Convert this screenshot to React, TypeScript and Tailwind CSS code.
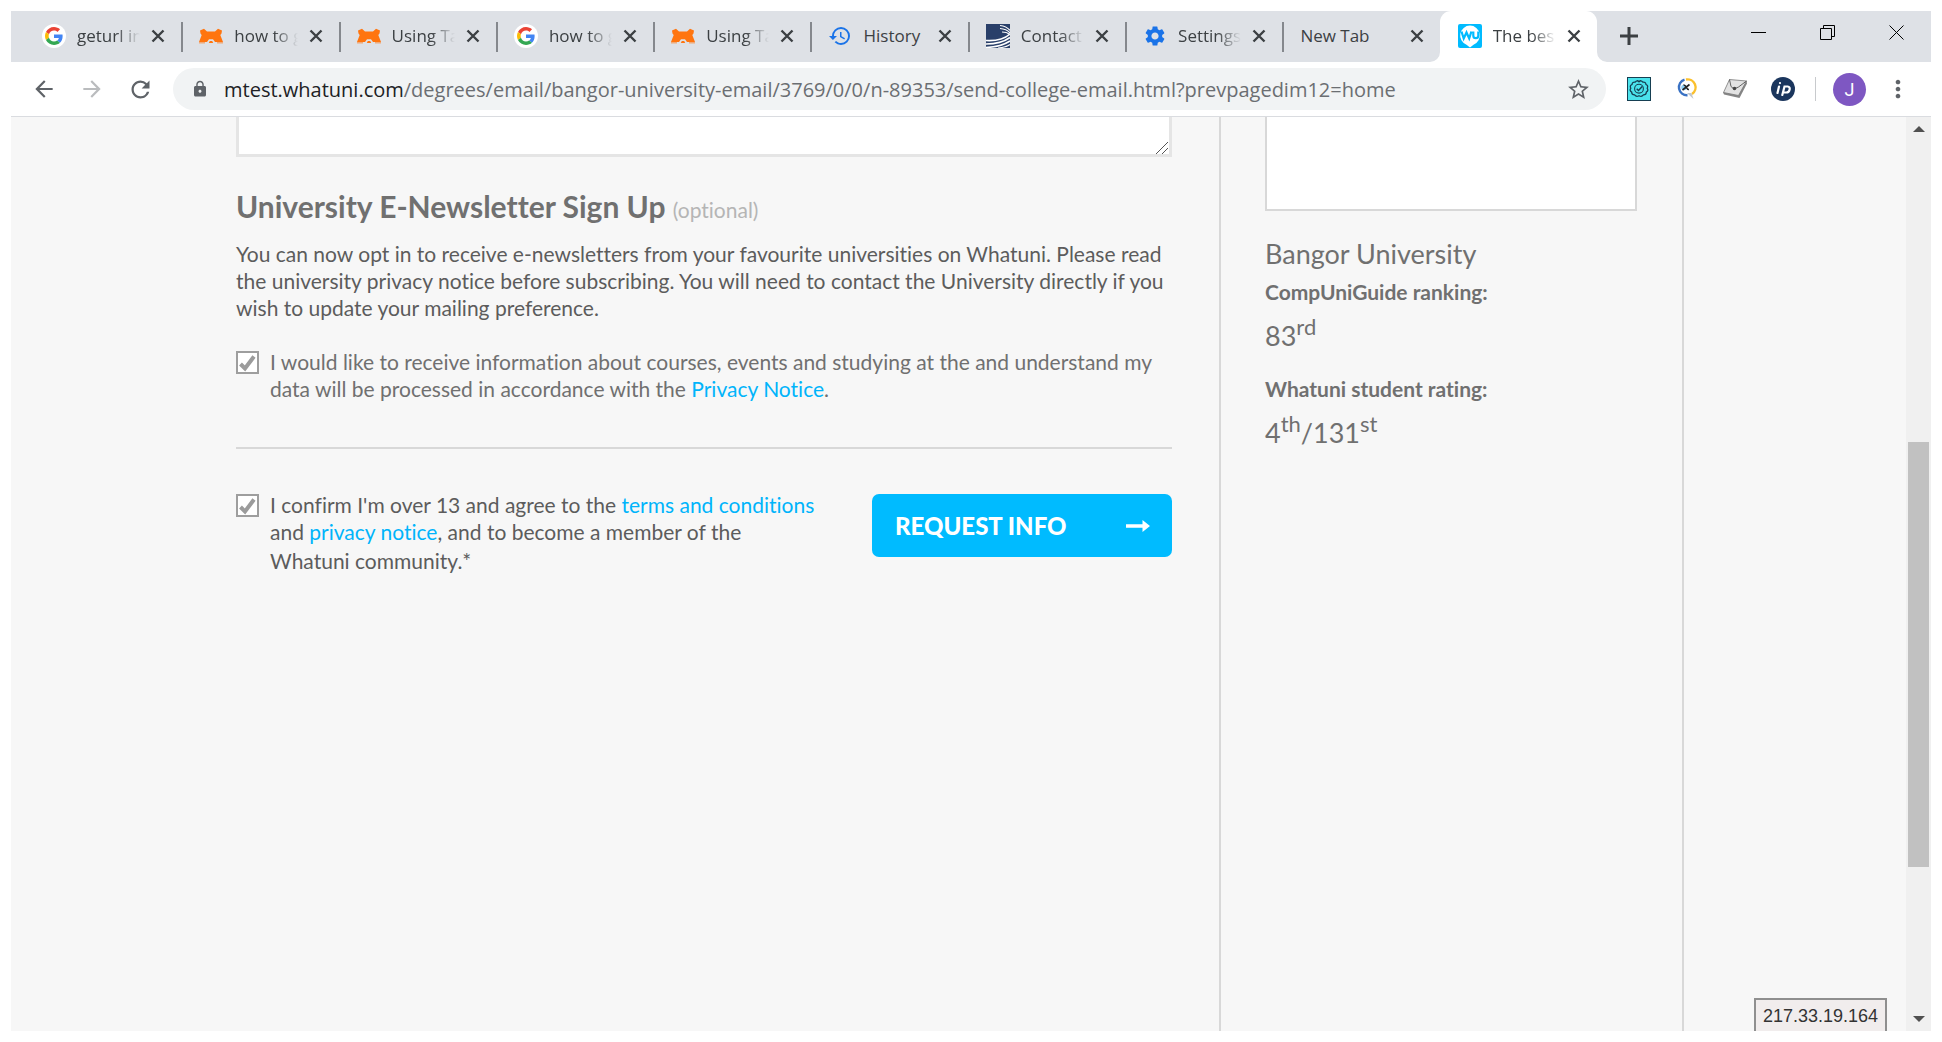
import type { ReactNode } from "react";
import {
  MdArrowBack,
  MdArrowForward,
  MdHistory,
  MdLock,
  MdMoreVert,
  MdRefresh,
  MdSettings,
  MdStarBorder,
} from "react-icons/md";

function GoogleIcon() {
  return (
    <span className="flex size-6 items-center justify-center rounded-full bg-white">
      <svg viewBox="0 0 48 48" className="size-[18px]" aria-hidden="true">
        <path fill="#EA4335" d="M24 9.5c3.54 0 6.71 1.22 9.21 3.6l6.85-6.85C35.9 2.38 30.47 0 24 0 14.62 0 6.51 5.38 2.56 13.22l7.98 6.19C12.43 13.72 17.74 9.5 24 9.5z" />
        <path fill="#4285F4" d="M46.98 24.55c0-1.57-.15-3.09-.38-4.55H24v9.02h12.94c-.58 2.96-2.26 5.48-4.78 7.18l7.73 6c4.51-4.18 7.09-10.36 7.09-17.65z" />
        <path fill="#FBBC05" d="M10.53 28.59A14.5 14.5 0 0 1 9.77 24c0-1.6.27-3.14.76-4.59l-7.98-6.19A23.9 23.9 0 0 0 0 24c0 3.88.92 7.54 2.56 10.78l7.97-6.19z" />
        <path fill="#34A853" d="M24 48c6.48 0 11.93-2.13 15.89-5.81l-7.73-6c-2.15 1.45-4.92 2.3-8.16 2.3-6.26 0-11.57-4.22-13.47-9.91l-7.98 6.19C6.51 42.62 14.62 48 24 48z" />
      </svg>
    </span>
  );
}

function FoxIcon() {
  return (
    <svg viewBox="0 0 24 24" className="size-6" aria-hidden="true">
      <path
        fill="#ff750f"
        d="M1 6.500 5 4.800 8 7.500h8l3-2.700 4 1.700-.5 3-1.200 1.500L24 18h-8l-2-2.800h-4L8 18H0l2.700-7L1.500 9.500z"
      />
      <path fill="#ff750f" d="M10.800 17h2.400l1 2H9.800zM0 18.400h6v.8H0zM18 18.400h6v.8h-6z" />
    </svg>
  );
}

function WavesIcon() {
  return (
    <svg viewBox="0 0 24 24" className="size-6" aria-hidden="true">
      <path fill="#293f69" d="M0 0h24v24H0z" />
      <g fill="none" stroke="#fff">
        <path strokeWidth="1.600" d="M0 16.500c9 .5 18-1 24-6.500M0 20c10 0 18-2 24-6.500M0 23.500c10-.5 18-2.500 24-6.500" />
        <path strokeWidth="1.200" d="M12 24c5-.5 9-1.500 12-3.500M14 1.500c4 .5 8 2.500 10 5M14 4.500c4 .2 8 2 10 4.500M16 8c3 0 6 1 8 2.500" />
      </g>
    </svg>
  );
}

function WhatuniIcon() {
  return (
    <svg viewBox="0 0 24 24" className="size-6" aria-hidden="true">
      <rect width="24" height="24" rx="2" fill="#00bbff" />
      <path fill="#fff" d="M12 1.500a10 10 0 0 1 3.500 19.300L12 23.500l-3.500-2.700A10 10 0 0 1 12 1.500z" />
      <path
        fill="none"
        stroke="#00bbff"
        strokeWidth="2.200"
        d="M3.500 7.500 5.700 14.500 8.500 8.500 11.200 14.500l2.200-7M15.300 7.500v4.200a2.500 2.500 0 0 0 5 0V7.500"
      />
    </svg>
  );
}

function CloseMark() {
  return (
    <svg viewBox="0 0 14 14" className="size-[14px]" fill="none" stroke="#3c4043" strokeWidth="2.400" aria-hidden="true">
      <path d="M1.500 1.500l11 11M12.500 1.500l-11 11" />
    </svg>
  );
}

type TabData = { title: string; icon?: ReactNode; active?: boolean };

const tabs: TabData[] = [
  { title: "geturl in", icon: <GoogleIcon /> },
  { title: "how to g", icon: <FoxIcon /> },
  { title: "Using Ta", icon: <FoxIcon /> },
  { title: "how to g", icon: <GoogleIcon /> },
  { title: "Using Ta", icon: <FoxIcon /> },
  { title: "History", icon: <MdHistory className="size-6 text-[#1a73e8]" /> },
  { title: "Contact", icon: <WavesIcon /> },
  { title: "Settings", icon: <MdSettings className="size-6 text-[#1a73e8]" /> },
  { title: "New Tab" },
  { title: "The bes", icon: <WhatuniIcon />, active: true },
];

function Tab({ title, icon, active }: TabData) {
  const beforeActive = title === "New Tab";
  const fades = title !== "History" && title !== "New Tab";
  return (
    <div
      className={
        active
          ? "relative flex h-full min-w-0 flex-1 items-center rounded-t-[11px] bg-white pr-4 pb-0.5 pl-[18px]"
          : "relative flex h-full min-w-0 flex-1 items-center pr-4 pb-0.5 pl-[18px]"
      }
    >
      {active && (
        <>
          <svg viewBox="0 0 10 10" className="absolute bottom-0 -left-[10px] size-[10px]" aria-hidden="true">
            <path fill="#fff" d="M10 0v10H0A10 10 0 0 0 10 0z" />
          </svg>
          <svg viewBox="0 0 10 10" className="absolute -right-[10px] bottom-0 size-[10px]" aria-hidden="true">
            <path fill="#fff" d="M0 0v10h10A10 10 0 0 1 0 0z" />
          </svg>
        </>
      )}
      {icon && <span className="mr-[11px] shrink-0">{icon}</span>}
      <span
        className={
          fades
            ? "min-w-0 flex-1 overflow-hidden text-[17px] leading-6 whitespace-nowrap text-[#3c4043] [mask-image:linear-gradient(to_right,#000_calc(100%-24px),transparent)]"
            : "min-w-0 flex-1 overflow-hidden text-[17px] leading-6 whitespace-nowrap text-[#3c4043]"
        }
      >
        {title}
      </span>
      <button type="button" aria-label={`Close ${title}`} className="ml-[11px] shrink-0">
        <CloseMark />
      </button>
      {!active && !beforeActive && <span className="absolute top-[11px] -right-0.5 h-[30px] w-[2px] bg-[#85888d]" />}
    </div>
  );
}

function TabStrip() {
  return (
    <div className="flex h-[51px] items-center bg-[#dee1e6] pl-[13px]">
      <div className="flex h-full w-[1573px] min-w-0 shrink">
        {tabs.map((tab, i) => (
          <Tab key={i} {...tab} />
        ))}
      </div>
      <button type="button" aria-label="New tab" className="mb-0.5 ml-[23px] shrink-0">
        <svg viewBox="0 0 18 18" className="size-[18px]" stroke="#3c4043" strokeWidth="3" aria-hidden="true">
          <path d="M9 0v18M0 9h18" />
        </svg>
      </button>
      <div className="mr-[26px] mb-2 ml-auto flex shrink-0 gap-[53px]">
        <button type="button" aria-label="Minimize">
          <svg viewBox="0 0 16 16" className="size-4" stroke="#000" aria-hidden="true">
            <path d="M0 7.500h15" />
          </svg>
        </button>
        <button type="button" aria-label="Restore">
          <svg viewBox="0 0 16 16" className="size-4" fill="none" stroke="#000" aria-hidden="true">
            <path d="M.5 3.500h11v11H.5zM3.500 3.500v-3h11v11h-3" />
          </svg>
        </button>
        <button type="button" aria-label="Close window">
          <svg viewBox="0 0 16 16" className="size-4" fill="none" stroke="#000" aria-hidden="true">
            <path d="M.5.5l14 14M14.500.5l-14 14" />
          </svg>
        </button>
      </div>
    </div>
  );
}

function Extensions() {
  return (
    <div className="flex shrink-0 items-center gap-6">
      <button type="button" aria-label="Verified badge extension">
        <svg viewBox="0 0 24 24" className="size-6" fill="none" stroke="#163f52" aria-hidden="true">
          <rect x=".5" y=".5" width="23" height="23" fill="#4be3ec" />
          <path
            strokeWidth="1.300"
            d="M12 4.800q2-2.200 3.800.3 2.800-.5 3.200 2.400 2.600 1.200 1.200 3.700 1.600 2.500-.8 3.800-.1 2.900-3 2.900-1.700 2.400-4.400.8-2.700 1.600-4.400-.8-2.900 0-3-2.900-2.400-1.300-.8-3.800-1.400-2.500 1.200-3.700.4-2.900 3.200-2.400Q10 2.600 12 4.800z"
          />
          <circle cx="12" cy="11.700" r="4.400" strokeWidth="1.100" />
          <path strokeWidth="1.400" d="M9.700 11.700l1.800 1.800 3.700-4" />
        </svg>
      </button>
      <button type="button" aria-label="Search extension">
        <svg viewBox="0 0 24 24" className="size-6" fill="none" aria-hidden="true">
          <path stroke="#fbc02d" strokeWidth="2.400" d="M11 2.500A8 8 0 0 1 17 17" />
          <path stroke="#3a72c4" strokeWidth="2.400" d="M9.500 2.700a8 8 0 0 0 3 15.600" />
          <circle cx="9" cy="10.500" r="2.800" fill="#8fd0f5" />
          <path stroke="#222" strokeWidth="1.600" d="M8.500 8c3-.5 2.500 5 5.500 4.500M14.500 7.500L7.500 13" />
          <path fill="#c3c7cc" d="M12 16l6.500 6-2-6z" />
        </svg>
      </button>
      <button type="button" aria-label="Mail extension">
        <svg viewBox="0 0 24 24" className="size-6" aria-hidden="true">
          <path fill="#858585" d="M0 15.500L1 17.500l15.500 3.500L24 6.500 23.500 4z" />
          <path fill="#e2e2e2" stroke="#777" strokeWidth=".8" d="M6.500 2.500L23.500 4l-8 14.500-15-3z" />
          <path fill="none" stroke="#555" strokeWidth=".9" d="M6.500 2.500l1.500 7 3 2.500 4.500-2 8-6" />
          <circle cx="11.500" cy="11.500" r="1.800" fill="#444" />
        </svg>
      </button>
      <button type="button" aria-label="IP extension" className="flex size-6 items-center justify-center rounded-full bg-[#1b365d]">
        <svg viewBox="0 0 24 24" className="size-6" fill="none" stroke="#fff" strokeWidth="2.200" strokeLinecap="round" aria-hidden="true">
          <path d="M8 9.500l-1.500 6.500M9 6v.1M11.300 18l2.200-8.500h3.300c3.200 0 2.200 6-1.500 6h-3" />
        </svg>
      </button>
    </div>
  );
}

function Toolbar() {
  return (
    <div className="flex h-[55px] items-center border-b border-[#dadce0] bg-white pr-[19px] pl-[20px]">
      <div className="flex shrink-0 items-center gap-[22px]">
        <button type="button" aria-label="Back">
          <MdArrowBack className="size-[26px] text-[#5f6368]" />
        </button>
        <button type="button" aria-label="Forward">
          <MdArrowForward className="size-[26px] text-[#babcbe]" />
        </button>
        <button type="button" aria-label="Reload">
          <MdRefresh className="size-[27px] text-[#5f6368]" />
        </button>
      </div>
      <div className="mr-[21px] ml-[19px] flex h-[42px] min-w-0 flex-1 items-center rounded-full bg-[#f1f3f4] pr-[15px] pl-[18px]">
        <MdLock className="size-[18px] shrink-0 text-[#5f6368]" />
        <p className="ml-[15px] min-w-0 flex-1 overflow-hidden pt-px text-[20px] leading-7 whitespace-nowrap text-[#6b6e72]">
          <span className="text-[#202124]">mtest.whatuni.com</span>
          /degrees/email/bangor-university-email/3769/0/0/n-89353/send-college-email.html?prevpagedim12=home
        </p>
        <button type="button" aria-label="Bookmark this page" className="shrink-0">
          <MdStarBorder className="size-[25px] text-[#5f6368]" />
        </button>
      </div>
      <Extensions />
      <span className="ml-5 h-6 w-px shrink-0 bg-[#c8cacd]" />
      <button
        type="button"
        aria-label="Profile"
        className="ml-[17px] flex size-[33px] shrink-0 items-center justify-center rounded-full bg-[#7e57c2] font-['Roboto',sans-serif] text-[18px] text-white"
      >
        J
      </button>
      <button type="button" aria-label="Menu" className="ml-[18px] shrink-0">
        <MdMoreVert className="size-[28px] text-[#5f6368]" />
      </button>
    </div>
  );
}

function TickBox({ id }: { id: string }) {
  return (
    <span className="relative mt-[3px] size-[23px] shrink-0">
      <input
        id={id}
        type="checkbox"
        defaultChecked
        className="peer block size-full appearance-none border-2 border-[#9e9e9e] bg-white"
      />
      <svg
        viewBox="0 0 23 23"
        className="pointer-events-none absolute inset-0 hidden size-full peer-checked:block"
        fill="none"
        stroke="#9b9b9b"
        strokeWidth="4"
        aria-hidden="true"
      >
        <path d="M4.500 13l4.500 4.500L18 5.500" />
      </svg>
    </span>
  );
}

function SignUpForm() {
  return (
    <form className="min-w-0 flex-1 pr-[47px] pl-[225px] text-[21px] leading-[27px] text-[#5c5c5c]">
      <div className="relative">
        <textarea
          aria-label="Message"
          className="block h-[40px] w-full resize-none border-x-3 border-b-3 border-[#e5e5e5] bg-white"
        />
        <svg viewBox="0 0 12 12" className="absolute right-1 bottom-[3px] size-3" stroke="#555" aria-hidden="true">
          <path d="M0 12L12 0M6 12l6-6" />
        </svg>
      </div>
      <h2 className="mt-[31px] text-[30px] leading-9 font-bold text-[#707070]">
        University E-Newsletter Sign Up{" "}
        <span className="text-[21px] leading-6 font-normal text-[#b5b5b5]">(optional)</span>
      </h2>
      <p className="mt-4">
        You can now opt in to receive e-newsletters from your favourite universities on Whatuni. Please read the
        university privacy notice before subscribing. You will need to contact the University directly if you wish to
        update your mailing preference.
      </p>
      <div className="mt-[27px] flex gap-[11px] text-[#707070]">
        <TickBox id="newsletter" />
        <label htmlFor="newsletter">
          I would like to receive information about courses, events and studying at the and understand my data will be
          processed in accordance with the{" "}
          <a href="#privacy" className="text-[#00b4fb]">
            Privacy Notice
          </a>
          .
        </label>
      </div>
      <hr className="mt-[45px] border-t-2 border-[#d8d8d8]" />
      <div className="mt-[42px] flex items-start justify-between">
        <div className="flex gap-[11px]">
          <TickBox id="terms" />
          <label htmlFor="terms" className="w-[545px]">
            I confirm I'm over 13 and agree to the{" "}
            <a href="#terms" className="text-[#00b4fb]">
              terms and conditions
            </a>{" "}
            and{" "}
            <a href="#privacy" className="text-[#00b4fb]">
              privacy notice
            </a>
            , and to become a member of the
            <br />
            Whatuni community.<span className="leading-[31px]">*</span>
          </label>
        </div>
        <button
          type="submit"
          className="mt-[3px] flex h-[63px] w-[300px] shrink-0 items-center justify-between rounded-[7px] bg-[#00bbff] pr-[22px] pl-[23px] text-[24px] font-black text-white"
        >
          REQUEST INFO
          <svg viewBox="0 0 24 12" className="h-3 w-6" fill="#fff" aria-hidden="true">
            <path d="M0 4.300h16.500V0L24 6l-7.500 6V7.700H0z" />
          </svg>
        </button>
      </div>
    </form>
  );
}

function UniversityPanel() {
  return (
    <aside className="w-[465px] shrink-0 border-x-2 border-[#d8d8d8] pr-[45px] pl-[44px] text-[#707070]">
      <div className="h-[94px] border-x-2 border-b-2 border-[#d8d8d8] bg-white" />
      <h3 className="mt-[26px] text-[27px] leading-[33px]">Bangor University</h3>
      <h4 className="mt-2 text-[21px] leading-[27px] font-bold">CompUniGuide ranking:</h4>
      <p className="mt-[14px] text-[27px] leading-[33px]">
        83<sup className="text-[22px]">rd</sup>
      </p>
      <h4 className="mt-[23px] text-[21px] leading-[27px] font-bold">Whatuni student rating:</h4>
      <p className="mt-[14px] text-[27px] leading-[33px]">
        4<sup className="text-[22px]">th</sup>/131<sup className="text-[22px]">st</sup>
      </p>
    </aside>
  );
}

function ScrollBar() {
  return (
    <div className="flex w-[25px] shrink-0 flex-col items-center justify-between bg-[#f0f0f0] py-[9px]">
      <svg viewBox="0 0 12 6" className="h-[6px] w-3" fill="#505050" aria-hidden="true">
        <path d="M0 6l6-6 6 6z" />
      </svg>
      <div className="flex w-[21px] flex-1 flex-col">
        <div className="grow-[310]" />
        <div className="grow-[424] bg-[#c1c1c1]" />
        <div className="grow-[149]" />
      </div>
      <svg viewBox="0 0 12 6" className="h-[6px] w-3" fill="#505050" aria-hidden="true">
        <path d="M0 0l6 6 6-6z" />
      </svg>
    </div>
  );
}

export default function App() {
  return (
    <div className="h-screen bg-white p-[11px]">
      <div className="flex h-full flex-col overflow-hidden font-['Open_Sans',sans-serif]">
        <TabStrip />
        <Toolbar />
        <div className="flex min-h-0 flex-1">
          <main className="relative flex min-w-0 flex-1 overflow-hidden bg-[#f7f7f7] pr-[222px] font-['Lato',sans-serif] [font-variant-ligatures:none]">
            <SignUpForm />
            <UniversityPanel />
            <div className="absolute right-[19px] bottom-0 h-[33px] border-x-2 border-t-2 border-[#8f8f8f] bg-[#f1eded] px-[7px] pt-[4px] font-['Liberation_Sans',sans-serif] text-[18px] leading-6 text-[#333]">
              217.33.19.164
            </div>
          </main>
          <ScrollBar />
        </div>
      </div>
    </div>
  );
}
